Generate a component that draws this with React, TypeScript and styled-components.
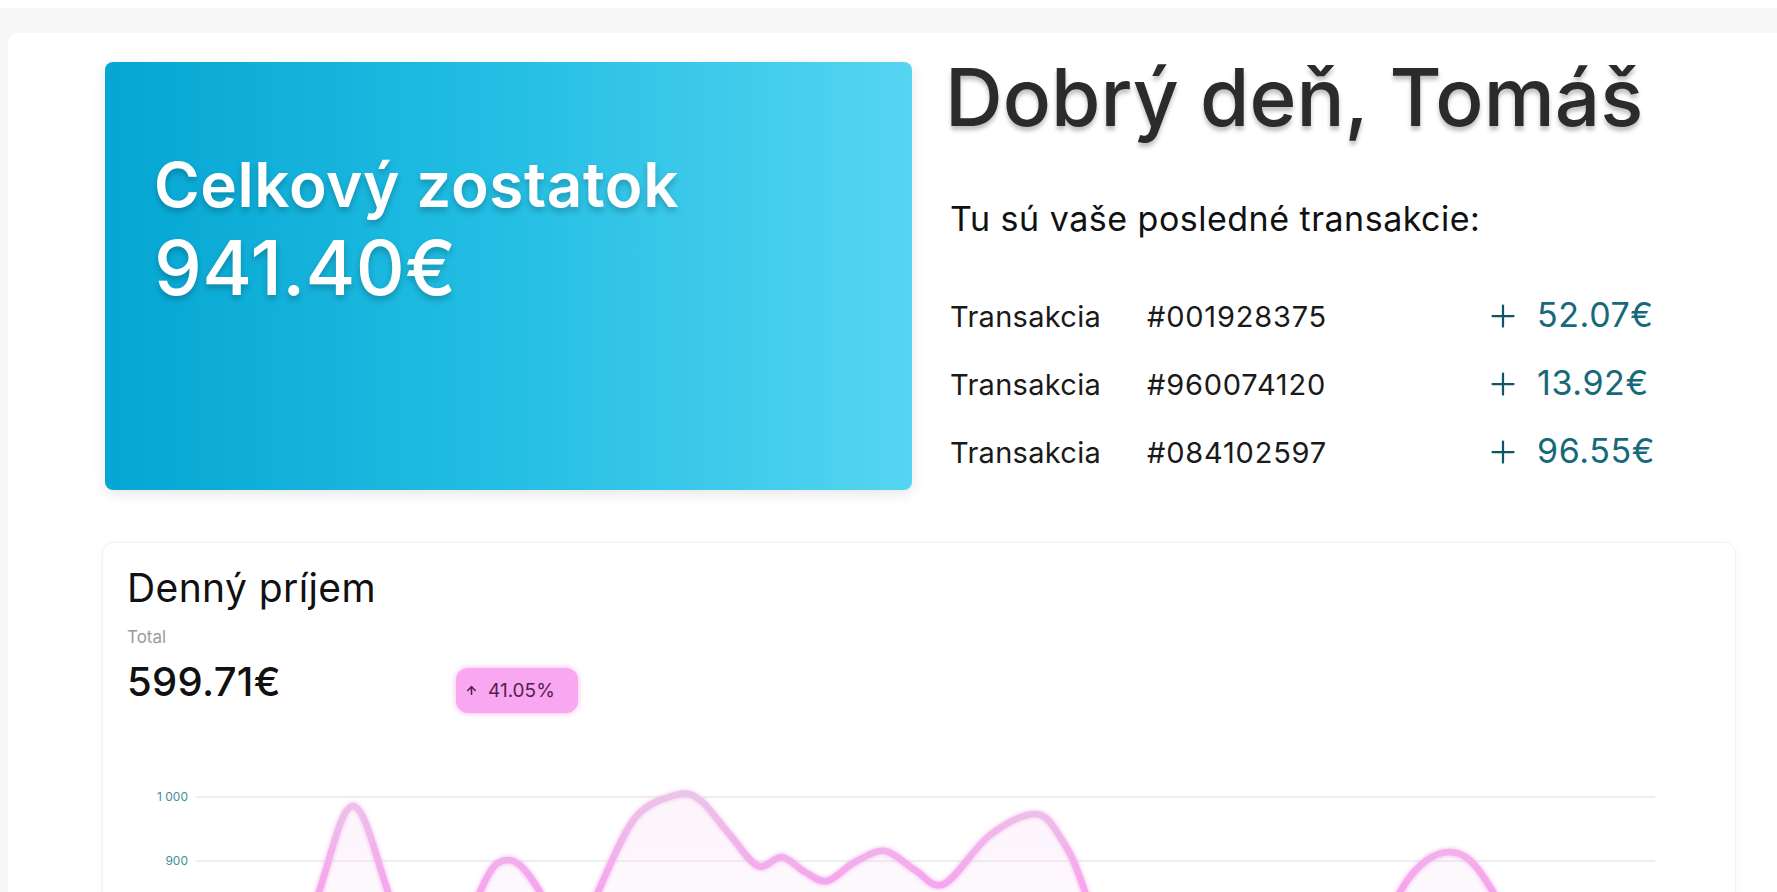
import styled, { createGlobalStyle } from 'styled-components';
import { ArrowUp, Plus } from 'lucide-react';

const GlobalStyle = createGlobalStyle`
  * { box-sizing: border-box; }
  body {
    margin: 0;
    background: #ffffff;
    font-family: Inter, 'Noto Sans', sans-serif;
    color: #111111;
  }
`;

const Shell = styled.div`
  margin-top: 8px;
  padding: 25px 0 0 8px;
  background: #f7f7f7;
`;

const Panel = styled.main`
  background: #ffffff;
  border-top-left-radius: 10px;
  padding: 29px 41px 0 94px;
`;

const TopRow = styled.section`
  display: flex;
  align-items: flex-start;
  gap: 36px;
  padding-left: 3px;
`;

const BalanceCard = styled.div`
  flex: 0 0 807px;
  height: 428px;
  padding: 92px 0 0 49px;
  border-radius: 8px;
  background: linear-gradient(90deg, #05a6d3 0%, #20bce2 45%, #55d5f2 100%);
  box-shadow: 0 4px 14px rgba(0, 0, 0, 0.1);
  color: #ffffff;
`;

const BalanceLabel = styled.h2`
  margin: 0;
  font-size: 62px;
  line-height: 1;
  font-weight: 600;
  letter-spacing: 0.6px;
  text-shadow: 0 4px 6px rgba(0, 0, 0, 0.22);
`;

const BalanceValue = styled.div`
  margin-top: 13px;
  font-size: 76px;
  line-height: 1;
  font-weight: 500;
  letter-spacing: 0.3px;
  text-shadow: 0 4px 6px rgba(0, 0, 0, 0.22);
`;

const Greeting = styled.div`
  display: flex;
  flex-direction: column;
  margin-top: -5px;
`;

const Hello = styled.h1`
  margin: 0 0 0 -3px;
  font-size: 80px;
  line-height: 1;
  font-weight: 500;
  color: #2b2b2b;
  text-shadow: 0 4px 4px rgba(0, 0, 0, 0.25);
`;

const Lead = styled.p`
  margin: 65px 0 0 2px;
  font-size: 34px;
  line-height: 1;
  letter-spacing: 0.5px;
  color: #111111;
`;

const TxList = styled.ul`
  list-style: none;
  margin: 59px 0 0 2px;
  padding: 0;
  display: flex;
  flex-direction: column;
  gap: 28px;
`;

const TxRow = styled.li`
  display: grid;
  grid-template-columns: 197px 338px 36px auto;
  align-items: baseline;
  height: 40px;
  line-height: 40px;
`;

const TxLabel = styled.span`
  font-size: 29px;
  letter-spacing: 0.3px;
  color: #1a1a1a;
`;

const TxId = styled.span`
  font-size: 29px;
  letter-spacing: 0.8px;
  color: #1a1a1a;
`;

const TxSign = styled.span`
  align-self: center;
  display: flex;
  color: #0f5566;
`;

const TxAmount = styled.span`
  margin-left: 16px;
  font-size: 34px;
  letter-spacing: 0.6px;
  color: #16697b;
`;

const ChartCard = styled.section`
  margin-top: 52px;
  border: 1px solid #f1f1f3;
  border-radius: 12px;
  box-shadow: 0 1px 8px rgba(0, 0, 0, 0.035);
  padding: 25px 24px 0;
  height: 600px;
  overflow: hidden;
`;

const ChartTitle = styled.h3`
  margin: 0;
  font-size: 39px;
  line-height: 1;
  font-weight: 400;
  letter-spacing: 0.4px;
  color: #111111;
`;

const TotalLabel = styled.div`
  margin-top: 22px;
  font-size: 17px;
  line-height: 1;
  color: #9a9a9a;
`;

const ValueRow = styled.div`
  display: flex;
  align-items: flex-start;
  margin-top: 17px;
`;

const TotalValue = styled.div`
  min-width: 329px;
  font-size: 40px;
  line-height: 1;
  font-weight: 500;
  letter-spacing: 0.3px;
  color: #111111;
  margin-top: -1px;
`;

const Badge = styled.div`
  margin-top: 5px;
  width: 122px;
  height: 45px;
  border-radius: 12px;
  background: #f8a7f0;
  box-shadow: 0 0 6px rgba(244, 150, 232, 0.7);
  display: flex;
  align-items: center;
  gap: 10px;
  padding-left: 9px;
  font-size: 19px;
  color: #55214f;
`;

const ChartArea = styled.div`
  margin: 27px -24px 0;
`;

const ChartSvg = styled.svg`
  display: block;
`;

const AxisText = styled.text`
  font-family: Inter, 'Noto Sans', sans-serif;
  font-size: 12px;
  fill: #3f8d9b;
`;

const transactions = [
  { id: '#001928375', amount: '52.07€' },
  { id: '#960074120', amount: '13.92€' },
  { id: '#084102597', amount: '96.55€' },
];

// points in page coordinates, shifted into the svg below
const OX = 103;
const OY = 740;
const curve: [number, number][] = [
  [196, 1010], [270, 1060], [319, 892], [353, 806], [388, 892], [432, 1040],
  [480, 892], [509, 860], [540, 892], [569, 960], [598, 892], [635, 818],
  [676, 795], [700, 800], [730, 835], [758, 866], [782, 857], [805, 872],
  [827, 881], [855, 862], [885, 851], [915, 870], [944, 884], [990, 835],
  [1036, 814], [1062, 840], [1085, 892], [1130, 1040], [1240, 1090], [1360, 1010],
  [1400, 892], [1449, 852], [1493, 892], [1560, 1040], [1655, 1000],
].map(([x, y]) => [x - OX, y - OY]);

const smoothPath = (pts: [number, number][]) => {
  let d = `M${pts[0][0]},${pts[0][1]}`;
  for (let i = 0; i < pts.length - 1; i++) {
    const p0 = pts[i - 1] || pts[i];
    const p1 = pts[i];
    const p2 = pts[i + 1];
    const p3 = pts[i + 2] || p2;
    const c1x = p1[0] + (p2[0] - p0[0]) / 6;
    const c1y = p1[1] + (p2[1] - p0[1]) / 6;
    const c2x = p2[0] - (p3[0] - p1[0]) / 6;
    const c2y = p2[1] - (p3[1] - p1[1]) / 6;
    d += ` C${c1x.toFixed(1)},${c1y.toFixed(1)} ${c2x.toFixed(1)},${c2y.toFixed(1)} ${p2[0]},${p2[1]}`;
  }
  return d;
};

const gridValues = [1000, 900, 800, 700, 600, 500];
const labelled = [1000, 900];

const IncomeChart = () => {
  const line = smoothPath(curve);
  const last = curve[curve.length - 1];
  const area = `${line} L${last[0]},420 L${curve[0][0]},420 Z`;
  const yOf = (v: number) => 57 + (1000 - v) * 0.64;

  return (
    <ChartSvg width={1632} height={420} viewBox="0 0 1632 420">
      <defs>
        <linearGradient id="stroke" x1="0" y1="50" x2="0" y2="160" gradientUnits="userSpaceOnUse">
          <stop offset="0" stopColor="#ecc5e9" />
          <stop offset="1" stopColor="#f7a1ee" />
        </linearGradient>
        <linearGradient id="fill" x1="0" y1="50" x2="0" y2="300" gradientUnits="userSpaceOnUse">
          <stop offset="0" stopColor="#f6d9f3" stopOpacity="0.28" />
          <stop offset="1" stopColor="#f6d9f3" stopOpacity="0" />
        </linearGradient>
        <filter id="glow" x="-5%" y="-20%" width="110%" height="140%">
          <feGaussianBlur stdDeviation="2" result="b" />
          <feMerge>
            <feMergeNode in="b" />
            <feMergeNode in="SourceGraphic" />
          </feMerge>
        </filter>
      </defs>
      {gridValues.map((v) => (
        <line key={v} x1={93} x2={1552} y1={yOf(v)} y2={yOf(v)} stroke="#e9e9ec" strokeWidth={1.5} />
      ))}
      {labelled.map((v) => (
        <AxisText key={v} x={85} y={yOf(v) + 4} textAnchor="end">
          {v === 1000 ? '1 000' : v}
        </AxisText>
      ))}
      <path d={area} fill="url(#fill)" />
      <path
        d={line}
        fill="none"
        stroke="url(#stroke)"
        strokeWidth={6.5}
        strokeLinecap="round"
        strokeLinejoin="round"
        filter="url(#glow)"
      />
    </ChartSvg>
  );
};

export default function App() {
  return (
    <>
      <GlobalStyle />
      <Shell>
        <Panel>
          <TopRow>
            <BalanceCard>
              <BalanceLabel>Celkový zostatok</BalanceLabel>
              <BalanceValue>941.40€</BalanceValue>
            </BalanceCard>

            <Greeting>
              <Hello>Dobrý deň, Tomáš</Hello>
              <Lead>Tu sú vaše posledné transakcie:</Lead>
              <TxList>
                {transactions.map((tx) => (
                  <TxRow key={tx.id}>
                    <TxLabel>Transakcia</TxLabel>
                    <TxId>{tx.id}</TxId>
                    <TxSign>
                      <Plus size={36} strokeWidth={1.5} />
                    </TxSign>
                    <TxAmount>{tx.amount}</TxAmount>
                  </TxRow>
                ))}
              </TxList>
            </Greeting>
          </TopRow>

          <ChartCard>
            <ChartTitle>Denný príjem</ChartTitle>
            <TotalLabel>Total</TotalLabel>
            <ValueRow>
              <TotalValue>599.71€</TotalValue>
              <Badge>
                <ArrowUp size={13} strokeWidth={3} />
                <span>41.05%</span>
              </Badge>
            </ValueRow>
            <ChartArea>
              <IncomeChart />
            </ChartArea>
          </ChartCard>
        </Panel>
      </Shell>
    </>
  );
}
